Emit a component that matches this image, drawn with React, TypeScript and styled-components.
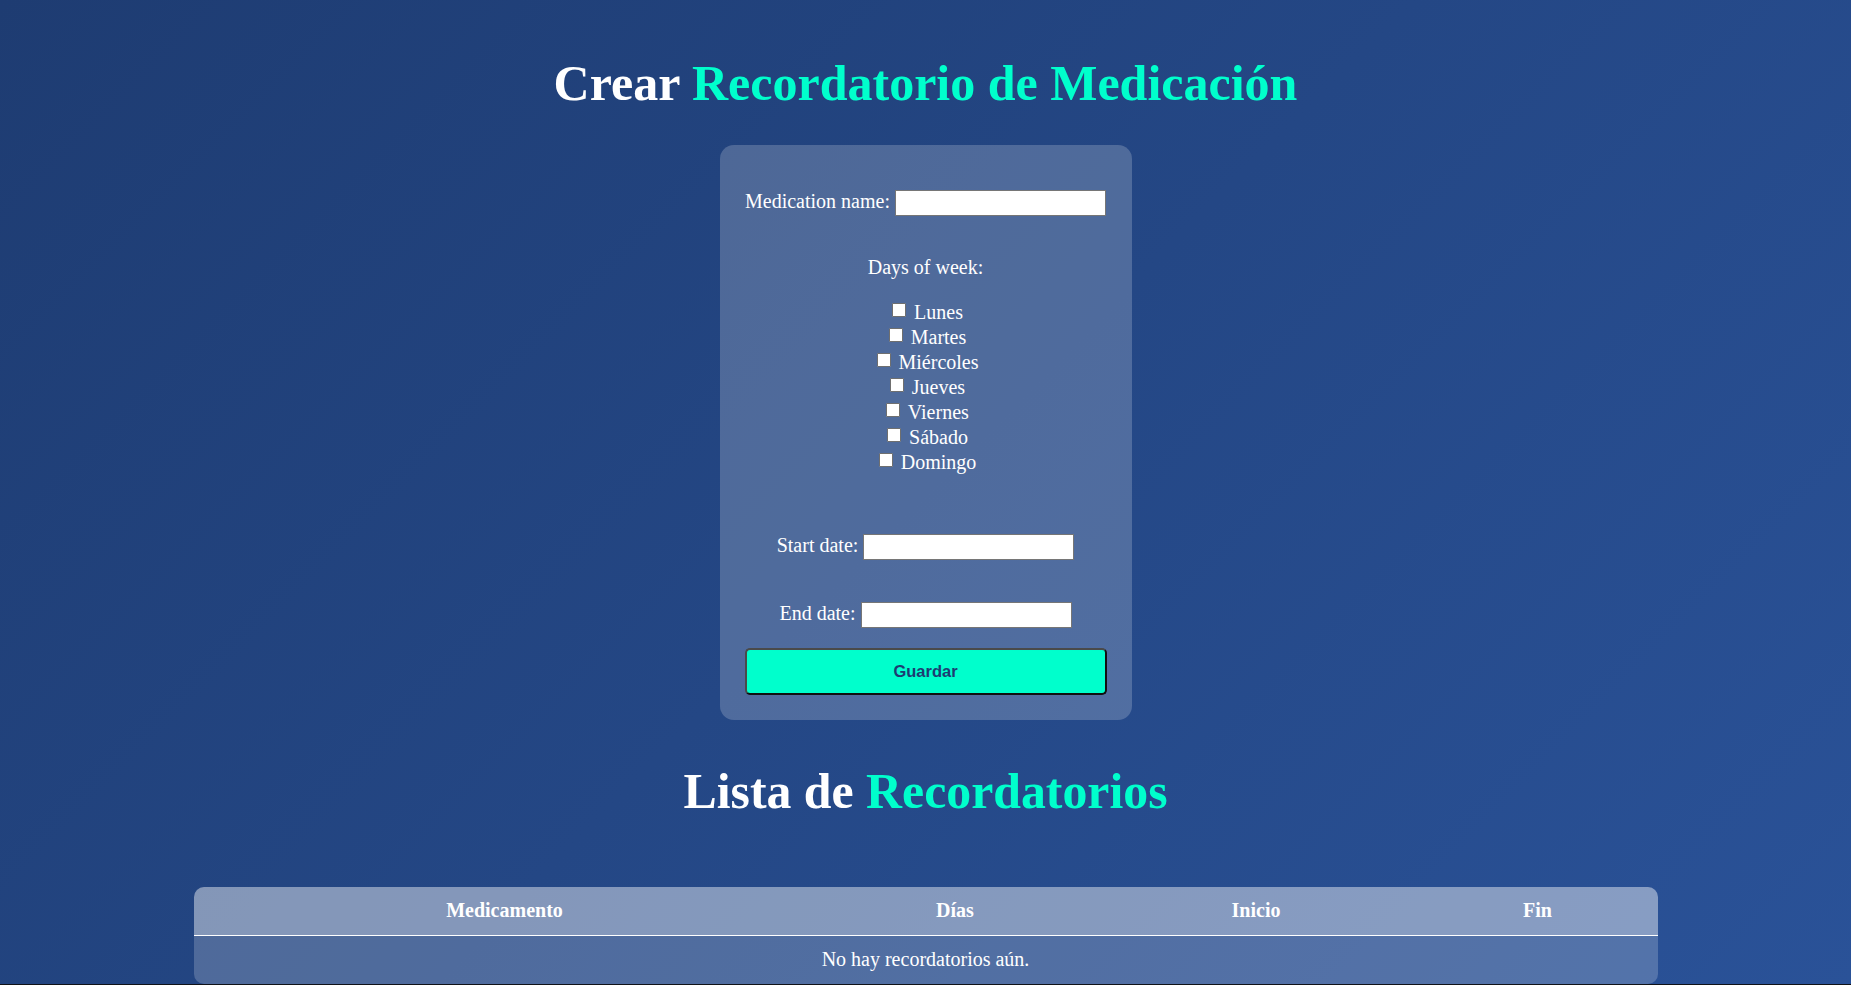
import React from "react";
import styled, { createGlobalStyle } from "styled-components";

const GlobalStyle = createGlobalStyle`
  html { background: #101218; }
  body {
    margin: 0;
    font-family: "Liberation Serif", "Times New Roman", serif;
    color: #fff;
  }
  * { box-sizing: border-box; }
`;

const Page = styled.main`
  display: flex;
  flex-direction: column;
  align-items: center;
  background: linear-gradient(135deg, #1e3c72 0%, #2a5298 100%);
`;

const PageTitle = styled.h1`
  margin: 54.6px 0 33.4px;
  font-size: 50px;
  line-height: 57px;
  font-weight: 700;
  text-align: center;
  color: #fff;
`;

const SectionTitle = styled.h2`
  margin: 42.5px 0 66.7px;
  font-size: 49.8px;
  line-height: 57px;
  font-weight: 700;
  text-align: center;
  color: #fff;
`;

const Accent = styled.span`
  color: #00ffcc;
`;

const Card = styled.form`
  width: 412px;
  padding: 25px;
  display: flex;
  flex-direction: column;
  background: rgba(255, 255, 255, 0.2);
  border-radius: 14px;
  font-size: 20px;
`;

const FieldRow = styled.div<{ $mt: number }>`
  display: flex;
  justify-content: center;
  align-items: center;
  gap: 5px;
  height: 26px;
  margin-top: ${(p) => p.$mt}px;
`;

const FieldLabel = styled.label`
  line-height: 23px;
  margin: -1px 0 1px;
  white-space: nowrap;
`;

const TextInput = styled.input`
  width: 211px;
  height: 26px;
  margin: 0;
  padding: 1px 2px;
  border: 1px solid #767676;
  border-radius: 0;
  background: #fff;
  font-size: 16px;
`;

const DaysTitle = styled.div`
  margin-top: 40px;
  line-height: 23px;
  text-align: center;
`;

const DayList = styled.div`
  margin-top: 21px;
  display: flex;
  flex-direction: column;
`;

const DayOption = styled.label`
  display: block;
  text-align: center;
  line-height: 25px;
  height: 25px;
`;

const DayCheck = styled.input`
  appearance: none;
  display: inline-block;
  width: 14px;
  height: 14px;
  margin: 3px 3px 2px 4px;
  vertical-align: baseline;
  background: #fff;
  border: 1px solid #6f6f6f;
  border-radius: 1px;
`;

const SaveButton = styled.button`
  margin-top: 20px;
  width: 100%;
  height: 47.5px;
  background: #00ffcc;
  color: #1e3c72;
  font-family: "Liberation Sans", Arial, sans-serif;
  font-weight: 700;
  font-size: 16.5px;
  border-width: 2px;
  border-style: solid;
  border-color: #4a4a4a #111 #111 #4a4a4a;
  border-radius: 5px;
  cursor: pointer;
`;

const TableFrame = styled.div`
  width: 1464px;
  border-radius: 10px;
  overflow: hidden;
  background: rgba(255, 255, 255, 0.2);
`;

const Table = styled.table`
  width: 100%;
  table-layout: fixed;
  border-collapse: separate;
  border-spacing: 0;
  font-size: 20px;
  color: #fff;
`;

const HeadCell = styled.th<{ $width: number }>`
  width: ${(p) => p.$width}px;
  padding: 12.5px;
  line-height: 23px;
  font-weight: 700;
  text-align: center;
  background: rgba(255, 255, 255, 0.3);
  border-bottom: 1px solid #fff;
`;

const EmptyCell = styled.td`
  padding: 12.5px;
  line-height: 23px;
  text-align: center;
`;

const days = ["Lunes", "Martes", "Miércoles", "Jueves", "Viernes", "Sábado", "Domingo"];

const columns: { label: string; width: number }[] = [
  { label: "Medicamento", width: 622 },
  { label: "Días", width: 279 },
  { label: "Inicio", width: 323 },
  { label: "Fin", width: 240 },
];

export default function App() {
  return (
    <>
      <GlobalStyle />
      <Page>
        <PageTitle>
          Crear <Accent>Recordatorio de Medicación</Accent>
        </PageTitle>
        <Card onSubmit={(e) => e.preventDefault()}>
          <FieldRow $mt={20}>
            <FieldLabel htmlFor="med">Medication name:</FieldLabel>
            <TextInput id="med" type="text" />
          </FieldRow>
          <DaysTitle>Days of week:</DaysTitle>
          <DayList>
            {days.map((d) => (
              <DayOption key={d}>
                <DayCheck type="checkbox" /> {d}
              </DayOption>
            ))}
          </DayList>
          <FieldRow $mt={59}>
            <FieldLabel htmlFor="start">Start date:</FieldLabel>
            <TextInput id="start" type="text" />
          </FieldRow>
          <FieldRow $mt={42}>
            <FieldLabel htmlFor="end">End date:</FieldLabel>
            <TextInput id="end" type="text" />
          </FieldRow>
          <SaveButton type="submit">Guardar</SaveButton>
        </Card>
        <SectionTitle>
          Lista de <Accent>Recordatorios</Accent>
        </SectionTitle>
        <TableFrame>
          <Table>
            <thead>
              <tr>
                {columns.map((c) => (
                  <HeadCell key={c.label} $width={c.width}>
                    {c.label}
                  </HeadCell>
                ))}
              </tr>
            </thead>
            <tbody>
              <tr>
                <EmptyCell colSpan={4}>No hay recordatorios aún.</EmptyCell>
              </tr>
            </tbody>
          </Table>
        </TableFrame>
      </Page>
    </>
  );
}
